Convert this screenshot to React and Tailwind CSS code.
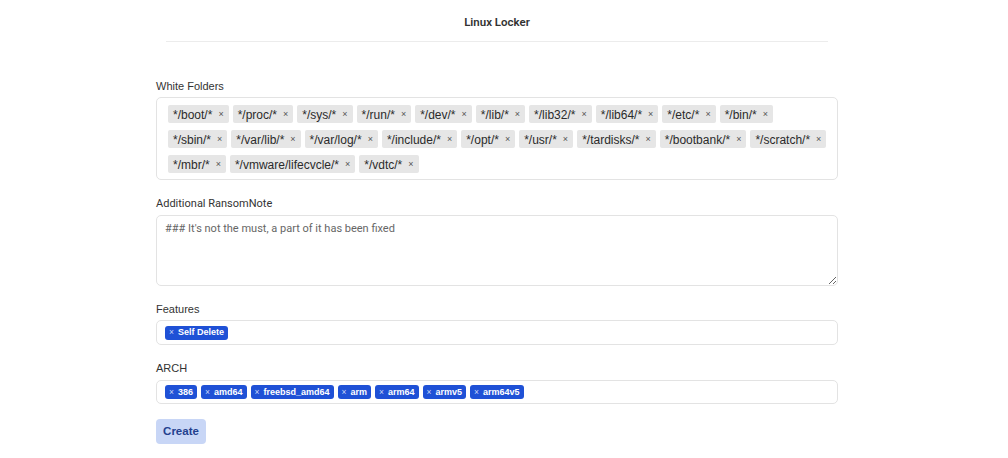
import React from "react";

const folders = [
  "*/boot/*", "*/proc/*", "*/sys/*", "*/run/*", "*/dev/*", "*/lib/*", "*/lib32/*", "*/lib64/*", "*/etc/*", "*/bin/*",
  "*/sbin/*", "*/var/lib/*", "*/var/log/*", "*/include/*", "*/opt/*", "*/usr/*", "*/tardisks/*", "*/bootbank/*", "*/scratch/*",
  "*/mbr/*", "*/vmware/lifecvcle/*", "*/vdtc/*",
];
const arch = ["386", "amd64", "freebsd_amd64", "arm", "arm64", "armv5", "arm64v5"];

function GrayTag({ label }) {
  return (
    <span className="inline-flex items-center h-[18px] bg-[#e6e6e6] rounded-[2px] pl-[5px] pr-[5px] pt-[1px] text-[12px] text-[#2b2b2b] leading-none">
      {label}
      <span className="ml-[6px] text-[9px] text-[#555]">×</span>
    </span>
  );
}

function BlueTag({ label }) {
  return (
    <span className="inline-flex items-center h-[14px] bg-[#1f51d6] rounded-[3px] px-[4px] text-[9px] font-bold text-white leading-none">
      <span className="mr-[4px] text-[8.5px] font-normal text-[#c9d6f7]">×</span>
      {label}
    </span>
  );
}

const sans = { fontFamily: "'Liberation Sans', Arial, sans-serif" };
const roboto = { fontFamily: "Roboto, sans-serif" };

export default function App() {
  return (
    <div className="w-[1008px] h-[458px] bg-white" style={sans}>
      <div className="w-[682px] ml-[156px]">
        <div className="mx-[10px] h-[42px] border-b border-[#ececec] flex items-center justify-center pt-[5px]">
          <span className="text-[11.5px] font-semibold text-[#333]" style={roboto}>Linux Locker</span>
        </div>

        <div className="mt-[36px] text-[11px] text-[#333] leading-[16px]">White Folders</div>
        <div className="mt-[3px] border border-[#e3e3e3] rounded-[5px] pl-[11px] pr-[10px] pt-[7px] pb-[6px] flex flex-wrap gap-x-[4px] gap-y-[7px]">
          {folders.map((f) => <GrayTag key={f} label={f} />)}
        </div>

        <div className="mt-[16px] text-[11px] text-[#333] leading-[16px]" style={roboto}>Additional RansomNote</div>
        <textarea
          className="mt-[3px] block w-full h-[71px] border border-[#e3e3e3] rounded-[5px] px-[8px] py-[5px] text-[11px] text-[#555] placeholder:text-[#666] outline-none resize-y"
          style={roboto}
          placeholder="### It's not the must, a part of it has been fixed"
        />

        <div className="mt-[15px] text-[11px] text-[#333] leading-[16px]">Features</div>
        <div className="mt-[3px] h-[25px] border border-[#e3e3e3] rounded-[5px] pl-[8px] flex items-center">
          <BlueTag label="Self Delete" />
        </div>

        <div className="mt-[15px] text-[11px] text-[#333] leading-[16px]">ARCH</div>
        <div className="mt-[4px] h-[24px] border border-[#e3e3e3] rounded-[5px] pl-[8px] flex items-center gap-[4px]">
          {arch.map((a) => <BlueTag key={a} label={a} />)}
        </div>

        <button className="mt-[15px] block w-[50px] h-[25px] rounded-[4px] bg-[#c8d6f6] text-[11.5px] font-bold text-[#23408e]">Create</button>
      </div>
    </div>
  );
}
